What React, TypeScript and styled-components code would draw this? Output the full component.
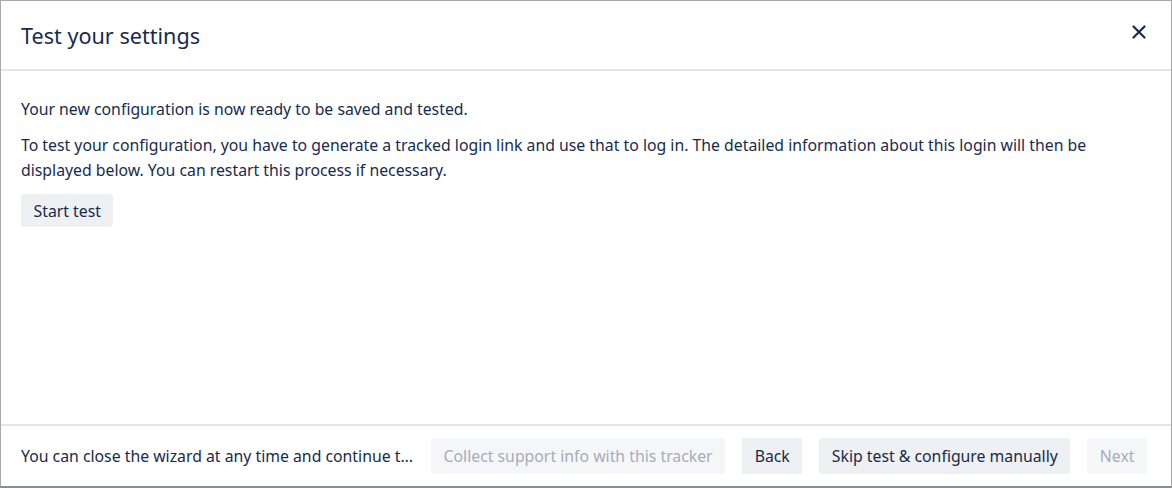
import React from "react";
import styled, { createGlobalStyle } from "styled-components";

const Global = createGlobalStyle`
  html, body { margin: 0; padding: 0; background: #ffffff; }
  body { font-family: "Noto Sans", "Liberation Sans", sans-serif; color: #172b4d; }
  * { box-sizing: border-box; }
`;

const Frame = styled.div`
  width: 1172px;
  height: 488px;
  border: 1px solid #a8a8a8;
  border-bottom: 2px solid #8a8d94;
  display: flex;
  flex-direction: column;
  background: #fff;
  overflow: hidden;
`;

const Header = styled.div`
  height: 70px;
  flex: none;
  display: flex;
  align-items: center;
  justify-content: space-between;
  padding: 0 20px 0 20px;
  border-bottom: 2px solid #e4e5e8;
`;

const Title = styled.h1`
  margin: 0;
  font-size: 21.6px;
  font-weight: 400;
  color: #172b4d;
  letter-spacing: 0;
`;

const CloseButton = styled.button`
  width: 24px;
  height: 24px;
  margin-top: -6px;
  border: none;
  background: transparent;
  padding: 0;
  display: flex;
  align-items: center;
  justify-content: center;
  cursor: pointer;
  color: #172b4d;
`;

const Body = styled.div`
  flex: 1;
  padding: 26px 20px 0 20px;
  font-size: 15.8px;
  line-height: 25px;
  color: #172b4d;
`;

const Para = styled.p`
  margin: 0 0 11px 0;
`;

const Button = styled.button<{ $disabled?: boolean; $tall?: boolean }>`
  font-family: inherit;
  font-size: 15.8px;
  height: ${(p) => (p.$tall ? "36px" : "33px")};
  padding: 0 12.5px;
  border: none;
  border-radius: 3px;
  background: ${(p) => (p.$disabled ? "#f5f6f8" : "#eef0f3")};
  color: ${(p) => (p.$disabled ? "#a5adba" : "#172b4d")};
  cursor: ${(p) => (p.$disabled ? "default" : "pointer")};
  white-space: nowrap;
  flex: none;
`;

const Footer = styled.div`
  height: 62px;
  flex: none;
  border-top: 2px solid #e4e5e8;
  display: flex;
  align-items: center;
  gap: 17px;
  padding: 0 24px 0 20px;
`;

const FooterNote = styled.div`
  flex: 1;
  min-width: 0;
  font-size: 15.8px;
  white-space: nowrap;
  overflow: hidden;
  text-overflow: ellipsis;
  color: #172b4d;
`;

export default function App() {
  return (
    <>
      <Global />
      <Frame>
        <Header>
          <Title>Test your settings</Title>
          <CloseButton aria-label="Close">
            <svg width="14" height="14" viewBox="0 0 14 14">
              <path d="M1.5 1.5 L12.5 12.5 M12.5 1.5 L1.5 12.5" stroke="#172b4d" strokeWidth="2.2" strokeLinecap="round" />
            </svg>
          </CloseButton>
        </Header>
        <Body>
          <Para>Your new configuration is now ready to be saved and tested.</Para>
          <Para>
            To test your configuration, you have to generate a tracked login link and use that to log in. The detailed
            information about this login will then be displayed below. You can restart this process if necessary.
          </Para>
          <Button>Start test</Button>
        </Body>
        <Footer>
          <FooterNote>You can close the wizard at any time and continue the configuration later.</FooterNote>
          <Button $tall $disabled>Collect support info with this tracker</Button>
          <Button $tall>Back</Button>
          <Button $tall>Skip test &amp; configure manually</Button>
          <Button $tall $disabled>Next</Button>
        </Footer>
      </Frame>
    </>
  );
}
